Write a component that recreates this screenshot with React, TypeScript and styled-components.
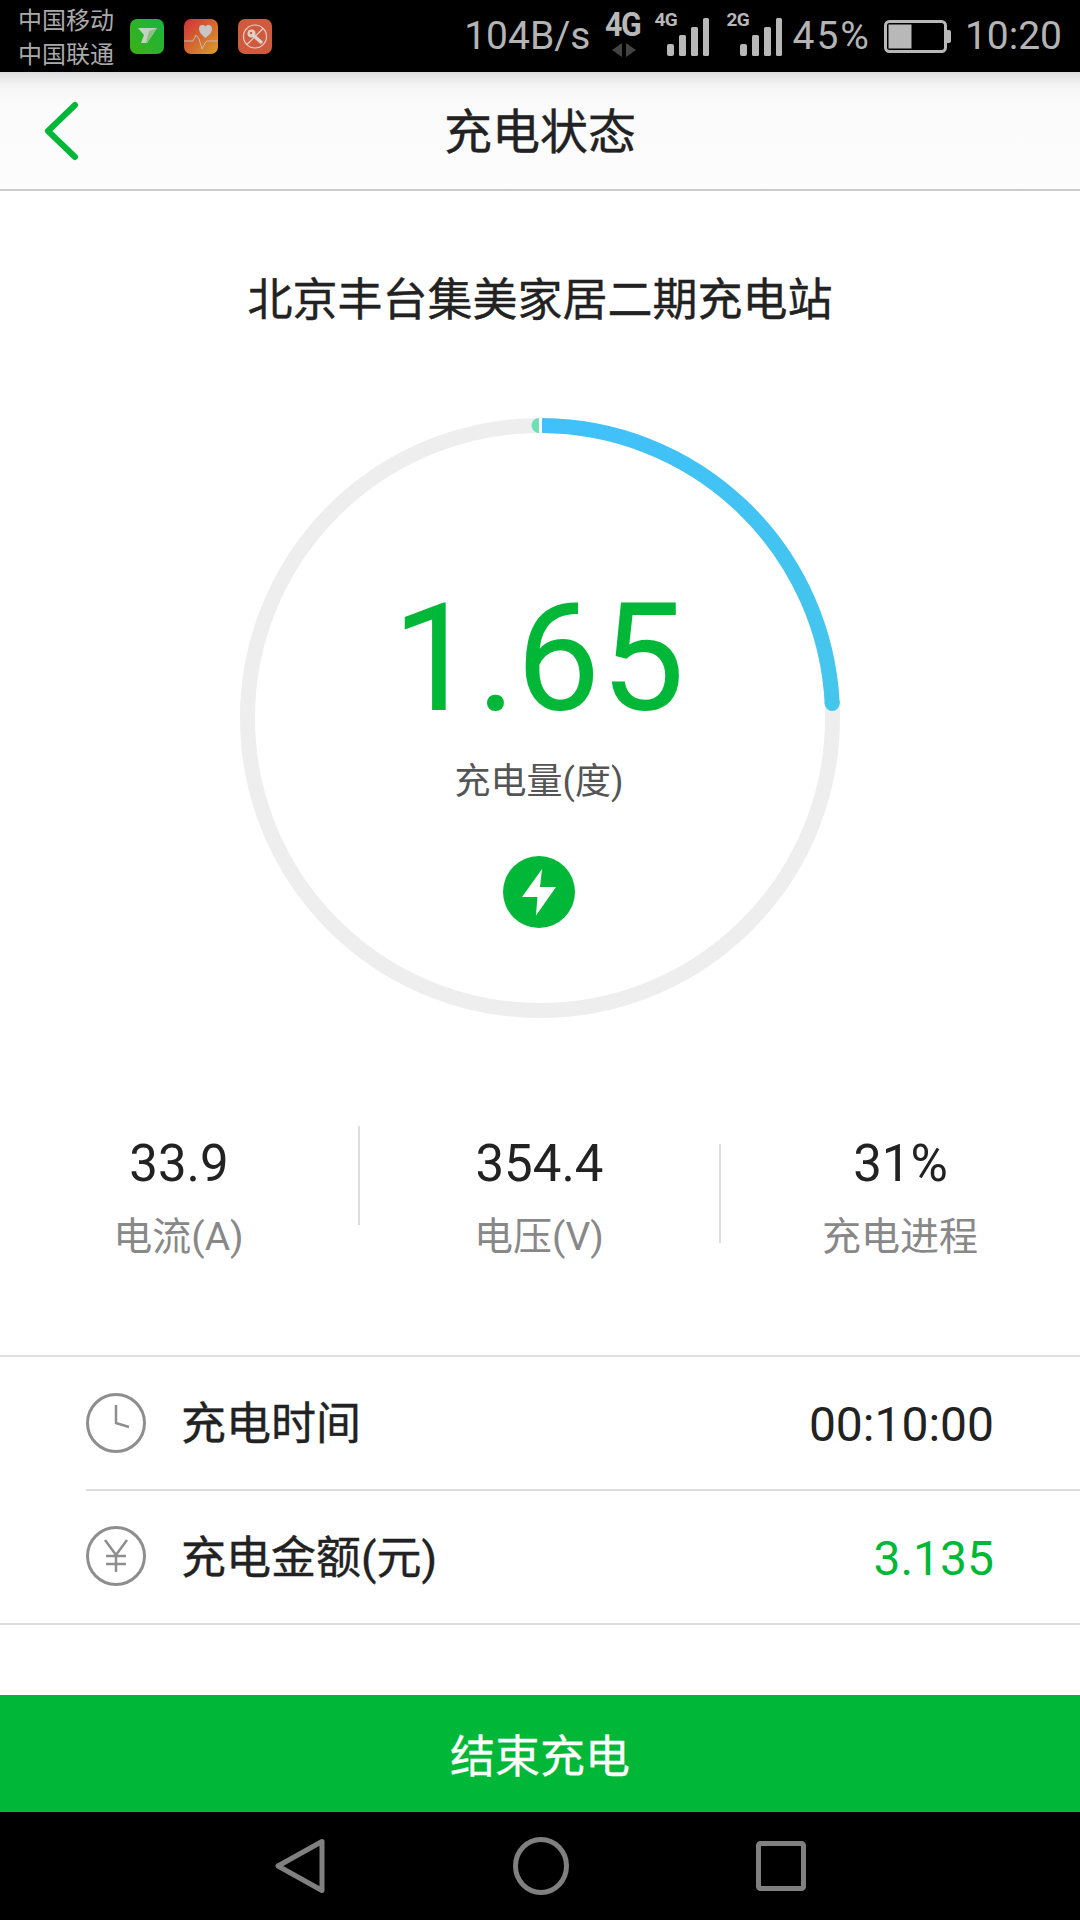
import styled, { createGlobalStyle } from "styled-components";

const GREEN = "#00b738";
const STATUS = "#b4b4b4";

const Global = createGlobalStyle`
  html, body { margin: 0; padding: 0; background: #fff; }
  * { box-sizing: border-box; }
  body { font-family: Roboto, "Noto Sans CJK SC", sans-serif; }
`;

const Page = styled.div`
  width: 1080px;
  height: 1920px;
  display: flex;
  flex-direction: column;
  overflow: hidden;
  background: #fff;
`;

const StatusBar = styled.div`
  height: 72px;
  background: #000;
  display: flex;
  align-items: center;
  padding: 0 18px 0 18px;
  color: ${STATUS};
`;

const Carriers = styled.div`
  width: 112px;
  font-size: 24px;
  line-height: 34px;
  font-family: "Noto Sans CJK SC", sans-serif;
  color: #aaa;
`;

const AppIcons = styled.div`
  display: flex;
  gap: 20px;
  flex: 1;
  svg { display: block; }
`;

const StatusText = styled.span<{ $spread?: boolean }>`
  font-size: 39px;
  line-height: 72px;
  letter-spacing: ${(p) => (p.$spread ? "2px" : "0")};
  margin-left: ${(p) => (p.$spread ? "9px" : "0")};
`;

const NetTag = styled.div`
  position: relative;
  width: 38px;
  height: 72px;
  margin-left: 15px;
`;

const NetLabel = styled.span`
  position: absolute;
  left: 0;
  top: 7px;
  font-size: 33px;
  line-height: 36px;
  font-weight: 700;
  letter-spacing: -1.5px;
  transform: scaleX(0.92);
  transform-origin: left center;
  color: #b8b8b8;
`;

const NetArrows = styled.svg`
  position: absolute;
  left: 7px;
  top: 43px;
`;

const Signal = styled.div<{ $left: number; $width: number }>`
  position: relative;
  width: ${(p) => p.$width}px;
  height: 72px;
  margin-left: ${(p) => p.$left}px;
  svg { position: absolute; right: 0; top: 18px; }
`;

const SignalLabel = styled.span`
  position: absolute;
  left: 0;
  top: 10px;
  font-size: 19px;
  line-height: 20px;
  font-weight: 700;
  letter-spacing: -0.5px;
  color: #b8b8b8;
`;

const Battery = styled.svg`
  margin: 0 14px 0 13px;
  display: block;
`;

const Header = styled.div`
  height: 119px;
  flex: none;
  display: grid;
  grid-template-columns: 1fr auto 1fr;
  align-items: center;
  background: linear-gradient(#dcdcdc 0, #f5f5f5 14px, #fbfbfb 34px, #fcfcfc 100%);
  border-bottom: 2px solid #ccc;
`;

const BackIcon = styled.svg`
  margin-left: 42px;
  display: block;
`;

const Title = styled.div`
  font-family: "Noto Sans CJK SC", sans-serif;
  font-size: 48px;
  -webkit-text-stroke: 0.4px #222;
  line-height: 60px;
  color: #222;
  margin-bottom: 6px;
`;

const Main = styled.div`
  flex: 1;
  display: flex;
  flex-direction: column;
  align-items: stretch;
`;

const Station = styled.div`
  font-family: "Noto Sans CJK SC", sans-serif;
  font-size: 45px;
  -webkit-text-stroke: 0.4px #222;
  line-height: 60px;
  color: #222;
  text-align: center;
  margin-top: 76px;
`;

const Ring = styled.div`
  width: 600px;
  height: 600px;
  margin: 91px auto 0;
  display: grid;
  > * { grid-area: 1 / 1; }
`;

const RingCenter = styled.div`
  display: flex;
  flex-direction: column;
  align-items: center;
`;

const Amount = styled.div`
  font-size: 150px;
  line-height: 152px;
  color: ${GREEN};
  margin: 165px 0 0 -3px;
`;

const AmountLabel = styled.div`
  font-family: Roboto, "Noto Sans CJK SC", sans-serif;
  font-size: 36px;
  line-height: 48px;
  color: #555;
  margin-top: 23px;
  margin-left: -2px;
`;

const BoltBadge = styled.svg`
  margin: 50px 0 0 -2px;
  display: block;
`;

const Stats = styled.div`
  display: flex;
  height: 337px;
`;

const StatCell = styled.div<{ $width: number }>`
  width: ${(p) => p.$width}px;
  display: flex;
  flex-direction: column;
  align-items: center;
  padding-top: 116px;
`;

const StatValue = styled.div`
  font-size: 51px;
  line-height: 60px;
  color: #222;
`;

const StatLabel = styled.div`
  font-size: 39px;
  line-height: 50px;
  color: #888;
  margin: 18px 0 0 -1px;
`;

const Divider = styled.div<{ $top: number }>`
  width: 2px;
  height: 99px;
  background: #ddd;
  margin-top: ${(p) => p.$top}px;
  flex: none;
`;

const List = styled.div`
  border-top: 2px solid #ddd;
  border-bottom: 2px solid #ddd;
  padding-left: 86px;
`;

const Row = styled.div<{ $line?: boolean }>`
  height: ${(p) => (p.$line ? 134 : 132)}px;
  display: flex;
  align-items: center;
  padding-right: 86px;
  border-bottom: ${(p) => (p.$line ? "2px solid #ddd" : "none")};
`;

const RowLabel = styled.div`
  font-family: Roboto, "Noto Sans CJK SC", sans-serif;
  font-size: 45px;
  -webkit-text-stroke: 0.4px #222;
  line-height: 56px;
  color: #222;
  margin: 4px 0 0 35px;
  flex: 1;
`;

const RowValue = styled.div<{ $green?: boolean }>`
  font-size: 48px;
  line-height: 56px;
  margin-top: 3px;
  color: ${(p) => (p.$green ? GREEN : "#222")};
`;

const EndButton = styled.div`
  margin-top: auto;
  height: 117px;
  background: ${GREEN};
  color: #fff;
  font-size: 45px;
  -webkit-text-stroke: 0.3px #fff;
  display: flex;
  align-items: center;
  justify-content: center;
  font-family: "Noto Sans CJK SC", sans-serif;
`;

const NavBar = styled.div`
  height: 108px;
  flex: none;
  background: #000;
  display: flex;
  align-items: center;
  padding-left: 274px;
  gap: 187px;
  svg { display: block; }
`;

const SignalBars = () => (
  <svg width="43" height="38" viewBox="0 0 43 38" fill="#b8b8b8">
    <rect x="0" y="26" width="7" height="12" rx="2" />
    <rect x="12" y="17" width="7" height="21" rx="1.5" />
    <rect x="24" y="9" width="7" height="29" rx="1.5" />
    <rect x="36" y="0" width="6" height="38" rx="1.5" />
  </svg>
);

const WechatIcon = () => (
  <svg width="34" height="35" viewBox="0 0 34 35">
    <defs>
      <linearGradient id="appGreen" x1="0" y1="1" x2="1" y2="0">
        <stop offset="0" stopColor="#3cb016" />
        <stop offset="1" stopColor="#18b540" />
      </linearGradient>
    </defs>
    <rect width="34" height="35" rx="7" fill="url(#appGreen)" />
    <path d="M8 9h19L17 24h-6l3-8z" fill="#c3d3bf" />
    <path d="M19 12l-3 12h1L27 9z" fill="#8cc084" />
  </svg>
);

const HeartIcon = () => (
  <svg width="34" height="35" viewBox="0 0 34 35">
    <defs>
      <linearGradient id="appHeart" x1="0" y1="0" x2="1" y2="1">
        <stop offset="0" stopColor="#d0303a" />
        <stop offset="1" stopColor="#d8a028" />
      </linearGradient>
    </defs>
    <rect width="34" height="35" rx="7" fill="url(#appHeart)" />
    <path d="M21.500 19c-3-2.500-6.500-5-6.500-9.500C15 6.500 18.500 4.500 21.500 7.500 24.500 4.500 28 6.500 28 9.500 28 14 24.500 16.500 21.500 19z" fill="#c6c6c6" />
    <path d="M0 22h9l3-6 3 4 3 10 3-6 2-2h11" fill="none" stroke="#c8b8a8" strokeWidth="1" />
  </svg>
);

const KeyIcon = () => (
  <svg width="34" height="35" viewBox="0 0 34 35">
    <rect width="34" height="35" rx="7" fill="#cf5a3e" />
    <circle cx="17" cy="17.500" r="11.500" fill="none" stroke="#e5d3cb" strokeWidth="1.200" />
    <path d="M9 25.500L25 9.500" stroke="#e5d3cb" strokeWidth="1.200" />
    <path d="M15.500 16.500L24 24" stroke="#dcd2cc" strokeWidth="3.500" />
    <circle cx="13.500" cy="14.500" r="4" fill="#dcd2cc" />
    <circle cx="13" cy="14" r="1.200" fill="#cf5a3e" />
  </svg>
);

const RingChart = () => (
  <svg width="600" height="600" viewBox="0 0 600 600">
    <defs>
      <linearGradient id="arcBlue" gradientUnits="userSpaceOnUse" x1="300" y1="0" x2="600" y2="290">
        <stop offset="0" stopColor="#40c0fa" />
        <stop offset="1" stopColor="#44c6ec" />
      </linearGradient>
    </defs>
    <circle cx="300" cy="300" r="292.500" fill="none" stroke="#eeeeee" strokeWidth="15" />
    <path d="M299 0A7.500 7.500 0 0 0 299 15z" fill="#6fe0b6" />
    <path d="M299 0h3v15h-3z" fill="#fff" />
    <path d="M302 7.500A292.500 292.500 0 0 1 592.200 285.500" fill="none" stroke="url(#arcBlue)" strokeWidth="15" />
    <circle cx="592.200" cy="285.500" r="7.500" fill="#44c6ec" />
  </svg>
);

const ClockIcon = () => (
  <svg width="60" height="60" viewBox="0 0 60 60" fill="none" stroke="#8e8e8e" strokeWidth="3">
    <circle cx="30" cy="30" r="28.500" />
    <path d="M30 12v18l13 4" strokeWidth="2.500" />
  </svg>
);

const YenIcon = () => (
  <svg width="60" height="60" viewBox="0 0 60 60" fill="none" stroke="#8e8e8e" strokeWidth="3" style={{ marginTop: -2 }}>
    <circle cx="30" cy="30" r="28.500" />
    <path d="M19 14l11 15 11-15M20 30h20M20 38h20M30 29v17" strokeWidth="2.500" />
  </svg>
);

export default function App() {
  return (
    <Page>
      <Global />
      <StatusBar>
        <Carriers>
          <div>中国移动</div>
          <div>中国联通</div>
        </Carriers>
        <AppIcons>
          <WechatIcon />
          <HeartIcon />
          <KeyIcon />
        </AppIcons>
        <StatusText>104B/s</StatusText>
        <NetTag>
          <NetLabel>4G</NetLabel>
          <NetArrows width="24" height="14" viewBox="0 0 24 14" fill="#444">
            <path d="M10 0v14L0 7zM14 0v14l10-7z" />
          </NetArrows>
        </NetTag>
        <Signal $left={11} $width={56}>
          <SignalLabel>4G</SignalLabel>
          <SignalBars />
        </Signal>
        <Signal $left={16} $width={57}>
          <SignalLabel>2G</SignalLabel>
          <SignalBars />
        </Signal>
        <StatusText $spread>45%</StatusText>
        <Battery width="67" height="33" viewBox="0 0 67 33" fill="none">
          <rect x="1.500" y="1.500" width="60" height="30" rx="4" stroke="#b8b8b8" strokeWidth="3" />
          <rect x="4.500" y="4.500" width="23" height="24" fill="#b8b8b8" />
          <path d="M63 10h2a2 2 0 0 1 2 2v9a2 2 0 0 1-2 2h-2z" fill="#b8b8b8" />
        </Battery>
        <StatusText>10:20</StatusText>
      </StatusBar>

      <Header>
        <BackIcon width="40" height="62" viewBox="0 0 40 62" fill="none" stroke={GREEN} strokeWidth="6" strokeLinecap="round" strokeLinejoin="round">
          <path d="M33 5L6 31l27 26" />
        </BackIcon>
        <Title>充电状态</Title>
        <div />
      </Header>

      <Main>
        <Station>北京丰台集美家居二期充电站</Station>
        <Ring>
          <RingChart />
          <RingCenter>
            <Amount>1.65</Amount>
            <AmountLabel>充电量(度)</AmountLabel>
            <BoltBadge width="72" height="72" viewBox="0 0 72 72">
              <circle cx="36" cy="36" r="36" fill={GREEN} />
              <path d="M39 13L19 41h15.400L33 59.500 53 31H37z" fill="#fff" />
            </BoltBadge>
          </RingCenter>
        </Ring>

        <Stats>
          <StatCell $width={358}>
            <StatValue>33.9</StatValue>
            <StatLabel>电流(A)</StatLabel>
          </StatCell>
          <Divider $top={108} />
          <StatCell $width={359}>
            <StatValue>354.4</StatValue>
            <StatLabel>电压(V)</StatLabel>
          </StatCell>
          <Divider $top={126} />
          <StatCell $width={359}>
            <StatValue>31%</StatValue>
            <StatLabel>充电进程</StatLabel>
          </StatCell>
        </Stats>

        <List>
          <Row $line>
            <ClockIcon />
            <RowLabel>充电时间</RowLabel>
            <RowValue>00:10:00</RowValue>
          </Row>
          <Row>
            <YenIcon />
            <RowLabel>充电金额(元)</RowLabel>
            <RowValue $green>3.135</RowValue>
          </Row>
        </List>

        <EndButton>结束充电</EndButton>
      </Main>

      <NavBar>
        <svg width="52" height="58" viewBox="0 0 52 58" fill="none" stroke="#808080" strokeWidth="5" strokeLinejoin="round">
          <path d="M48 4.500L4 29l44 24.500z" />
        </svg>
        <svg width="56" height="58" viewBox="0 0 56 58" fill="none" stroke="#808080" strokeWidth="5">
          <ellipse cx="28" cy="29" rx="25.500" ry="26.500" />
        </svg>
        <svg width="50" height="50" viewBox="0 0 50 50" fill="none" stroke="#808080" strokeWidth="5" strokeLinejoin="round">
          <rect x="2.500" y="2.500" width="45" height="45" rx="2" />
        </svg>
      </NavBar>
    </Page>
  );
}
